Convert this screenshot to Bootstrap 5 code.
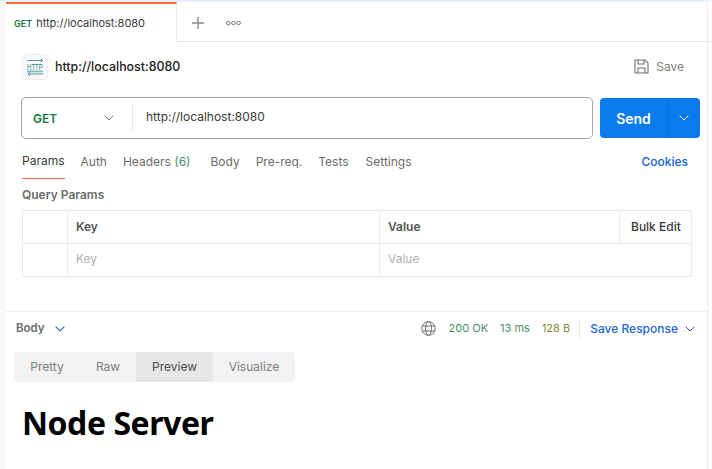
<!DOCTYPE html>
<html lang="en">
<head>
<meta charset="utf-8">
<title>Postman request</title>
<link href="https://cdn.jsdelivr.net/npm/bootstrap@5.3.0/dist/css/bootstrap.min.css" rel="stylesheet">
<style>
html,body{height:100%;}
body{width:712px;height:469px;overflow:hidden;background:#fff;font-family:Inter,"Liberation Sans",sans-serif;font-size:12px;color:#6b6b6b;}
.stripe{height:2px;background:#e8f0fb;}
.leftgutter{width:6px;background:#f9f9f9;}
.page-wrap{height:467px;}
.main-col{border-right:1px solid #ededed;margin-right:4px;}
.tabbar{height:40px;border-bottom:1px solid #e6e6e6;margin-right:-5px;}
.req-tab{width:171px;height:40px;border-top:2px solid #ff6c37;border-right:1px solid #e6e6e6;background:#fff;padding-left:8px;padding-top:2px;font-size:11px;color:#3a3a3a;}
.method-small{font-size:9px;font-weight:600;color:#0f7a3c;margin-right:4px;}
.plus-btn{margin-left:14px;margin-top:2px;}
.dots-btn{margin-left:21px;margin-top:2px;}
.titlebar{height:49px;padding-left:16px;padding-right:23px;}
.http-box{width:26px;height:26px;border:1px solid #ececec;border-radius:4px;background:#f9f9f9;margin-right:7px;}
.http-icon{overflow:visible;}
.req-title{font-size:12.4px;font-weight:500;color:#212121;padding-top:2px;}
.save-txt{font-size:12px;color:#808080;margin-left:7px;}
.urlrow{height:42px;padding-left:15px;margin-top:6px;}
.urlbox{width:572px;height:42px;border:1px solid #a6a6a6;border-radius:5px;}
.method-select{width:111px;padding-left:11px;padding-right:18px;font-size:12px;font-weight:600;color:#0f7a3c;height:26px;border-right:1px solid #e6e6e6;}
.method-name{padding-top:2px;}
.url-text{padding-left:13px;font-size:12px;color:#3a3a3a;padding-bottom:3px;}
.send-group{margin-left:7px;width:100px;height:40px;border-radius:4px;background:#097bed;overflow:hidden;}
.send-main{width:68px;color:#fff;font-size:14px;font-weight:600;border-right:1px solid #0a6fd4;}
.send-caret{width:32px;}
.reqtabs{margin-top:14px;padding-left:16px;padding-right:19px;height:26px;font-size:12px;color:#6b6b6b;}
.reqtab{height:26px;padding-bottom:9px;margin-right:16px;white-space:nowrap;}
.reqtab.cur{color:#3a3a3a;border-bottom:1px solid #f26b3a;}
.reqtab.gap-extra{margin-left:4px;}
.reqtab.wide-gap{margin-right:17px;}
.count{color:#3f8f6a;}
.cookies{color:#0b62d0;font-weight:500;font-size:12px;padding-bottom:9px;height:26px;}
.qp-title{font-size:12px;font-weight:600;color:#6b6b6b;padding-left:16px;margin-top:8px;height:16px;line-height:16px;}
.qp-wrap{padding-left:16px;margin-top:7px;width:686px;}
.qp-table{margin:0;table-layout:fixed;width:670px;border-color:#e6e6e6;font-size:12px;}
.qp-table td,.qp-table th{height:33px;padding:0 8px;vertical-align:middle;border-color:#ececec;color:#6b6b6b;}
.qp-table th{font-weight:600;color:#555;}
.qp-table th.bulk{color:#3a3a3a;font-weight:500;padding:0 0 0 11px;}
.qp-table td.ph{color:#b0b0b0;padding-bottom:2px;}
.col-check{width:45px;}
.col-key{width:312px;}
.col-bulk{width:72px;}
.resp-divider{margin-top:34px;border-top:1px solid #ececec;}
.resp-bar{height:33px;padding-left:10px;padding-right:12px;}
.body-lab{font-size:11.5px;font-weight:600;color:#6b6b6b;margin-right:10px;}
.status{font-size:11px;color:#3f8f6a;margin-right:12px;}
.status.size{color:#85893a;margin-right:0;}
.status.time{color:#3f8f6a;}
.globe{margin-right:13px;}
.vsep{width:1px;height:19px;background:#e6e6e6;margin:0 10px 0 9px;}
.save-resp{font-size:12px;font-weight:500;color:#2366d1;margin-right:7px;}
.segs{margin-left:8px;margin-top:7px;width:281px;height:30px;background:#f2f2f2;border-radius:4px;overflow:hidden;font-size:12px;color:#808080;}
.seg-pretty{width:66px;}
.seg-raw{width:56px;}
.seg-prev{width:77px;background:#e6e6e6;color:#4a4a4a;}
.seg-vis{width:82px;}
.page-h{font-family:"Noto Sans","Open Sans",sans-serif;font-weight:700;font-size:32px;letter-spacing:-.45px;line-height:44px;color:#000;margin:19px 0 0 16px;}
</style>
</head>
<body>
<div class="stripe"></div>
<div class="d-flex page-wrap">
  <div class="leftgutter flex-shrink-0"></div>
  <div class="main-col flex-grow-1 d-flex flex-column">
    <div class="tabbar d-flex align-items-center">
      <div class="req-tab d-flex align-items-center"><span class="method-small">GET</span><span>http://localhost:8080</span></div>
      <svg class="plus-btn" width="14" height="14" viewBox="0 0 14 14" fill="none" stroke="#8a8a8a" stroke-width="1.4"><path d="M7 1v12M1 7h12"/></svg>
      <svg class="dots-btn" width="15" height="6" viewBox="0 0 15 6" fill="none" stroke="#777" stroke-width="1"><circle cx="2.4" cy="3" r="1.8"/><circle cx="7.5" cy="3" r="1.8"/><circle cx="12.6" cy="3" r="1.8"/></svg>
    </div>
    <div class="titlebar d-flex align-items-center">
      <div class="http-box d-flex align-items-center justify-content-center">
        <svg class="http-icon" width="20" height="20" viewBox="0 0 20 20" fill="none" stroke="#4f9aa3" stroke-width="1">
          <path d="M2 3.5h15.5M15.5 1.5l2 2-2 2"/>
          <path d="M18 17H3M5 15l-2 2 2 2"/>
          <path d="M2 14.5h16" stroke="#7fb8bf" stroke-width="1.8"/>
          <text transform="translate(2 12.6) scale(1 1.4)" font-family="Liberation Sans,sans-serif" font-size="6.1" fill="#2f7f90" stroke="none">HTTP</text>
        </svg>
      </div>
      <span class="req-title">http://localhost:8080</span>
      <span class="ms-auto d-flex align-items-center">
        <svg width="15" height="15" viewBox="0 0 15 15" fill="none" stroke="#6f6f6f" stroke-width="1.1"><path d="M1 1h10l3 3v10H1zM4 1v4h6V1M4 14V9h7v5"/></svg>
        <span class="save-txt">Save</span>
      </span>
    </div>
    <div class="urlrow d-flex align-items-center">
      <div class="urlbox d-flex align-items-center">
        <div class="method-select d-flex align-items-center justify-content-between"><span class="method-name">GET</span>
          <svg width="10" height="6" viewBox="0 0 10 6" fill="none" stroke="#777" stroke-width="1"><path d="M.7.7 5 5 9.3.7"/></svg>
        </div>
        <div class="url-text">http://localhost:8080</div>
      </div>
      <div class="send-group d-flex">
        <div class="send-main d-flex align-items-center justify-content-center">Send</div>
        <div class="send-caret d-flex align-items-center justify-content-center">
          <svg width="10" height="6" viewBox="0 0 10 6" fill="none" stroke="#fff" stroke-width="1"><path d="M.7.7 5 5 9.3.7"/></svg>
        </div>
      </div>
    </div>
    <div class="reqtabs d-flex align-items-center">
      <div class="reqtab cur d-flex align-items-center">Params</div>
      <div class="reqtab d-flex align-items-center">Auth</div>
      <div class="reqtab d-flex align-items-center">Headers&nbsp;<span class="count">(6)</span></div>
      <div class="reqtab gap-extra d-flex align-items-center">Body</div>
      <div class="reqtab d-flex align-items-center">Pre-req.</div>
      <div class="reqtab wide-gap d-flex align-items-center">Tests</div>
      <div class="reqtab d-flex align-items-center">Settings</div>
      <div class="cookies ms-auto d-flex align-items-center">Cookies</div>
    </div>
    <div class="qp-title">Query Params</div>
    <div class="qp-wrap">
      <table class="table table-bordered qp-table">
        <colgroup><col class="col-check"><col class="col-key"><col><col class="col-bulk"></colgroup>
        <tr><th></th><th>Key</th><th>Value</th><th class="bulk">Bulk Edit</th></tr>
        <tr><td></td><td class="ph">Key</td><td class="ph" colspan="2">Value</td></tr>
      </table>
    </div>
    <div class="resp-divider"></div>
    <div class="resp-bar d-flex align-items-center">
      <span class="body-lab">Body</span>
      <svg width="10" height="6" viewBox="0 0 10 6" fill="none" stroke="#2366d1" stroke-width="1.1"><path d="M.7.7 5 5 9.3.7"/></svg>
      <span class="ms-auto d-flex align-items-center">
        <svg class="globe" width="15" height="15" viewBox="0 0 15 15" fill="none" stroke="#6f6f6f" stroke-width="1"><circle cx="7.5" cy="7.5" r="6.8"/><ellipse cx="7.5" cy="7.5" rx="3" ry="6.8"/><path d="M1.2 5h12.6M1.2 10h12.6"/></svg>
        <span class="status">200 OK</span><span class="status time">13 ms</span><span class="status size">128 B</span>
        <span class="vsep"></span>
        <span class="save-resp">Save Response</span>
        <svg width="10" height="6" viewBox="0 0 10 6" fill="none" stroke="#2366d1" stroke-width="1"><path d="M.7.7 5 5 9.3.7"/></svg>
      </span>
    </div>
    <div class="segs d-flex">
      <div class="seg-pretty d-flex align-items-center justify-content-center">Pretty</div>
      <div class="seg-raw d-flex align-items-center justify-content-center">Raw</div>
      <div class="seg-prev d-flex align-items-center justify-content-center">Preview</div>
      <div class="seg-vis d-flex align-items-center justify-content-center">Visualize</div>
    </div>
    <div class="page-h">Node Server</div>
  </div>
</div>
<script src="https://cdn.jsdelivr.net/npm/bootstrap@5.3.0/dist/js/bootstrap.bundle.min.js"></script>
</body>
</html>
